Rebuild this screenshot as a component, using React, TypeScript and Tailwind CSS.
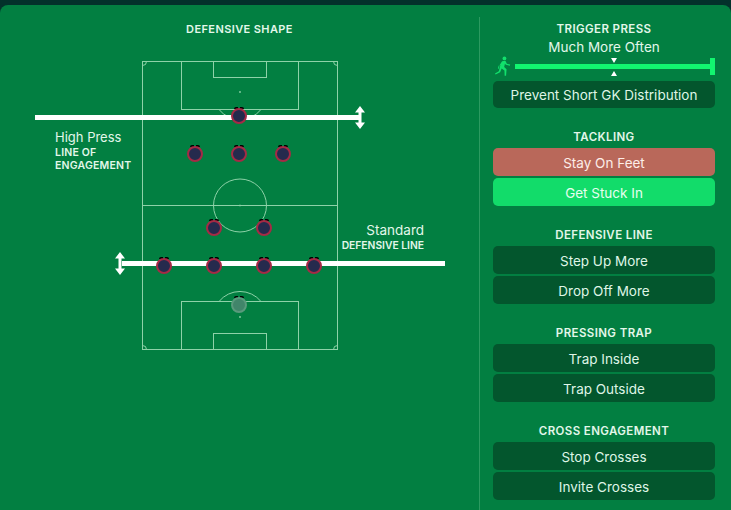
import React from "react";

const players = [
  { x: 239, y: 116 },
  { x: 195, y: 154 },
  { x: 239, y: 154 },
  { x: 283, y: 154 },
  { x: 214, y: 228 },
  { x: 264, y: 228 },
  { x: 164, y: 266 },
  { x: 214, y: 266 },
  { x: 264, y: 266 },
  { x: 314, y: 266 },
];

const sections = [
  { title: "TACKLING", options: ["Stay On Feet", "Get Stuck In"] },
  { title: "DEFENSIVE LINE", options: ["Step Up More", "Drop Off More"] },
  { title: "PRESSING TRAP", options: ["Trap Inside", "Trap Outside"] },
  { title: "CROSS ENGAGEMENT", options: ["Stop Crosses", "Invite Crosses"] },
];

function Pitch() {
  return (
    <svg
      className="absolute left-[141px] top-[56px]"
      width="198"
      height="290"
      viewBox="0 0 198 290"
      fill="none"
      stroke="#8ed2a8"
      strokeWidth="1"
    >
      <rect x="1.5" y="0.5" width="195" height="288" />
      <line x1="1.5" y1="144.5" x2="196.5" y2="144.5" />
      <circle cx="99" cy="144.5" r="26.5" />
      <rect x="40.5" y="0.5" width="117" height="48" />
      <rect x="72.5" y="0.5" width="53" height="16" />
      <rect x="40.5" y="240.5" width="117" height="48" />
      <rect x="72.5" y="272.5" width="53" height="16" />
      <path d="M78 48.5a27 27 0 0 0 42 0" />
      <path d="M78 240.5a27 27 0 0 1 42 0" />
      <path d="M1.5 4.5a4 4 0 0 0 4-4M192.5 0.5a4 4 0 0 0 4 4M1.5 284.500a4 4 0 0 1 4 4M192.500 288.500a4 4 0 0 1 4-4" />
      <circle cx="99" cy="31" r="0.6" />
      <circle cx="99" cy="144.500" r="0.6" />
      <circle cx="99" cy="256" r="0.6" />
    </svg>
  );
}

function PlayerDot({ x, y, keeper }: { x: number; y: number; keeper?: boolean }) {
  return (
    <div className="absolute h-[16px] w-[16px]" style={{ left: x - 8, top: y - 5 - 8 }}>
      <div className="absolute left-[3px] top-[-1px] h-[2px] w-[4px] rounded-tl-full bg-black" />
      <div className="absolute right-[3px] top-[-1px] h-[2px] w-[4px] rounded-tr-full bg-black" />
      <div
        className={
          keeper
            ? "absolute inset-0 rounded-full border-2 border-[#5a9a7c] bg-[#41856a]"
            : "absolute inset-0 rounded-full border-2 border-[#a52a45] bg-[#252a4d]"
        }
      />
    </div>
  );
}

function Runner() {
  return (
    <svg width="17" height="21" viewBox="0 0 17 22" fill="#12e06c" className="shrink-0">
      <circle cx="9.5" cy="2.5" r="2" />
      <path d="M7 5.5l3.5-.5 1.500 3 3.500 1-.3 1.200-4.200-1-1-1.200-.8 3.600 2.500 2.200-.5 7h-1.500l-.2-5.700-3-2-1.500 4-4.800 2.400-.6-1.200 4-2.300 1.600-6.500-1.800.8-.8 3H3.500l1-4z" />
    </svg>
  );
}

function MoveArrow({ className }: { className: string }) {
  return (
    <svg className={className} width="10" height="23" viewBox="0 0 10 23" fill="white">
      <path d="M5 0l5 6.500H6.500v10H10L5 23 0 16.500h3.500v-10H0z" />
    </svg>
  );
}

function Heading({ title }: { title: string }) {
  return (
    <div className="text-center text-[11.5px] font-semibold leading-[12px] tracking-[0.4px] text-[#e3f7ea]">
      {title}
    </div>
  );
}

function Option({ label }: { label: string }) {
  const bg =
    label === "Stay On Feet"
      ? "bg-[#b9685a] text-[#fdeee8]"
      : label === "Get Stuck In"
        ? "bg-[#12dc6a] text-[#e6fff0]"
        : "bg-[#03562d] text-[#dff5e6]";
  return (
    <div className={`flex h-[28px] items-center justify-center rounded-[5px] pt-[3px] text-[13.5px] ${bg}`}>
      {label}
    </div>
  );
}

export default function App() {
  return (
    <div
      className="h-[510px] w-[731px] overflow-hidden bg-[#03312b] pt-[5px] text-white"
      style={{ fontFamily: '"Inter", "Liberation Sans", sans-serif' }}
    >
      <div className="flex h-[505px] rounded-t-[8px] bg-[#027f41]">
        <div className="relative w-[479px] pt-[18px]">
          <div className="text-center text-[11px] font-semibold leading-[12px] tracking-[0.4px] text-[#e3f7ea]">
            DEFENSIVE SHAPE
          </div>
          <Pitch />

          <div className="absolute left-[35px] top-[110px] h-[5px] w-[324px] bg-white" />
          <MoveArrow className="absolute left-[355px] top-[101px]" />
          <div className="absolute left-[122px] top-[256px] h-[5px] w-[323px] bg-white" />
          <MoveArrow className="absolute left-[115px] top-[247px]" />

          {players.map((p) => (
            <PlayerDot key={`${p.x}-${p.y}`} x={p.x} y={p.y} />
          ))}
          <PlayerDot x={239} y={305} keeper />

          <div className="absolute left-[55px] top-[123px] text-[13px] leading-[18px] text-[#e3f7ea]">
            High Press
          </div>
          <div className="absolute left-[55px] top-[141px] w-[90px] text-[10.5px] font-semibold leading-[13px] tracking-[0.2px] text-[#e3f7ea]">
            LINE OF
            <br />
            ENGAGEMENT
          </div>
          <div className="absolute right-[55px] top-[216px] text-[13.5px] leading-[18px] text-[#e3f7ea]">
            Standard
          </div>
          <div className="absolute right-[55px] top-[234px] text-[10.3px] font-semibold leading-[13px] text-[#e3f7ea]">
            DEFENSIVE LINE
          </div>
        </div>

        <div className="mt-[12px] w-[252px] border-l border-[#2c9a60] pl-[13px] pr-[16px] pt-[6px]">
          <Heading title="TRIGGER PRESS" />
          <div className="mt-[3px] text-center text-[13.5px] leading-[18px] text-[#e3f7ea]">
            Much More Often
          </div>
          <div className="relative flex h-[21px] items-center pl-[2px]">
            <Runner />
            <div className="ml-[3px] h-[5px] flex-1 bg-[#12f56f]" />
            <div className="h-[17px] w-[5px] bg-[#12f56f]" />
            <div className="absolute left-[118px] top-[2px] h-0 w-0 border-x-[3px] border-t-[5px] border-x-transparent border-t-white" />
            <div className="absolute left-[118px] top-[15px] h-0 w-0 border-x-[3px] border-b-[5px] border-x-transparent border-b-white" />
          </div>
          <div className="mt-[4px] flex h-[27px] items-center justify-center rounded-[5px] bg-[#03562d] pt-px text-[13.5px] text-[#dff5e6]">
            Prevent Short GK Distribution
          </div>

          <div className="mt-[23px] flex flex-col gap-[23px]">
            {sections.map((s) => (
              <div key={s.title}>
                <Heading title={s.title} />
                <div className="mt-[5px] flex flex-col gap-[2px]">
                  {s.options.map((o) => (
                    <Option key={o} label={o} />
                  ))}
                </div>
              </div>
            ))}
          </div>
        </div>
      </div>
    </div>
  );
}
